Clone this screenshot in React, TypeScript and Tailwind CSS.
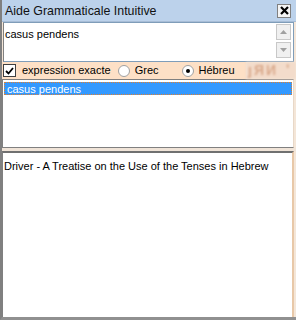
import React from "react";

const font = { fontFamily: '"Liberation Sans", Arial, sans-serif' };

function ScrollArrow({ up }: { up: boolean }) {
  return (
    <div className="w-[15px] h-[16px] bg-[#f0f0f0] border border-[#c8c8c8] flex items-center justify-center">
      <svg width="7" height="4" viewBox="0 0 7 4">
        {up ? <path d="M0 4 L3.5 0 L7 4 Z" fill="#a0a0a0" /> : <path d="M0 0 L3.5 4 L7 0 Z" fill="#a0a0a0" />}
      </svg>
    </div>
  );
}

export default function App() {
  return (
    <div className="w-[296px] h-[320px] bg-[#f4e6d8] flex flex-col text-[11px] text-black border-l-2 border-[#808080] border-b-[3px] border-b-[#909090] whitespace-nowrap" style={font}>
      {/* Title bar */}
      <div className="h-[22px] shrink-0 flex items-center justify-between pl-[3px] pr-[5px] bg-[#bcd2eb] border-b border-[#a8bdd6]">
        <span className="text-[12.4px] text-[#111] pt-[2px]">Aide Grammaticale Intuitive</span>
        <div className="w-[14px] h-[14px] bg-[#f4f4f4] border border-[#808080] flex items-center justify-center">
          <svg width="9" height="9" viewBox="0 0 9 9">
            <path d="M1 1 L8 8 M8 1 L1 8" stroke="#000" strokeWidth="2.2" />
          </svg>
        </div>
      </div>

      {/* Search input */}
      <div className="h-[40px] shrink-0 mx-[1px] mr-[2px] flex bg-white border border-[#7f9db9] border-l-[#808080]">
        <div className="flex-1 px-[1px] pt-[4px] leading-[14px]">casus pendens</div>
        <div className="w-[17px] flex flex-col gap-[2px] pt-[1px] pr-[3px]">
          <ScrollArrow up />
          <ScrollArrow up={false} />
        </div>
      </div>

      {/* Options */}
      <div className="h-[17px] shrink-0 flex">
        <div className="w-[244px] bg-[#fde0c6] flex items-center pl-[1px]">
          <div className="w-[13px] h-[13px] bg-white border border-[#404040] flex items-center justify-center">
            <svg width="9" height="8" viewBox="0 0 9 8">
              <path d="M1 4 L3.5 6.5 L8 1" stroke="#000" strokeWidth="1.8" fill="none" />
            </svg>
          </div>
          <span className="ml-[6px]">expression exacte</span>
          <div className="ml-[7px] w-[12px] h-[12px] rounded-full bg-white border border-[#a0a0a0]" />
          <span className="ml-[5px]">Grec</span>
          <div className="ml-[23px] w-[12px] h-[12px] rounded-full bg-white border border-[#a0a0a0] flex items-center justify-center">
            <div className="w-[4px] h-[4px] rounded-full bg-black" />
          </div>
          <span className="ml-[5px]">Hébreu</span>
        </div>
        <div className="flex-1 bg-[#f3dccb] text-[#d9a88a] text-[14px] font-bold tracking-[2px] blur-[1px] flex items-center overflow-hidden pl-[2px]">
          ȷЯИ <span className="ml-[8px]">ʹ</span>
        </div>
      </div>

      {/* Results list */}
      <div className="h-[69px] shrink-0 mr-[2px] bg-white border border-[#808080] border-r-[#e8d8c8] pt-[2px] px-[1px]">
        <div className="h-[13px] bg-[#3399ff] text-white leading-[12px] pl-[2px] border border-dotted border-[#e08030]">casus pendens</div>
      </div>

      {/* Splitter */}
      <div className="h-[3px] shrink-0 bg-[#f0e4d8]" />

      {/* Detail */}
      <div className="flex-1 mr-[2px] bg-white border-t-2 border-[#707070] border-l border-l-[#808080] border-r-2 border-r-[#e8c8a8] pl-[1px] pt-[6px] leading-[14px]">
        Driver - A Treatise on the Use of the Tenses in Hebrew
      </div>
    </div>
  );
}
